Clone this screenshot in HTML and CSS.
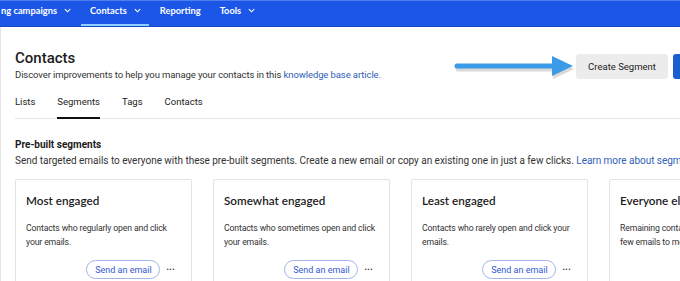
FILE: index.html
```html
<!DOCTYPE html>
<html lang="en">
<head>
    <meta charset="UTF-8">
    <meta name="viewport" content="width=device-width, initial-scale=1.0">
    <title>Contacts - Segments</title>

    <link rel="stylesheet" href="styles.css">
</head>
<body>

<nav class="topnav">
    <a class="nav-item first">ng campaigns
        <svg class="chev" viewBox="0 0 8 5"><path d="M1 1l3 3 3-3"/></svg>
    </a>
    <a class="nav-item active">Contacts
        <svg class="chev" viewBox="0 0 8 5"><path d="M1 1l3 3 3-3"/></svg>
    </a>
    <a class="nav-item">Reporting</a>
    <a class="nav-item">Tools
        <svg class="chev" viewBox="0 0 8 5"><path d="M1 1l3 3 3-3"/></svg>
    </a>
</nav>

<div class="page">

    <div class="page-head">
        <div class="page-title">
            <h1>Contacts</h1>
            <p class="lead">Discover improvements to help you manage your contacts in this <a href="#">knowledge base article.</a></p>
        </div>
        <div class="actions">
            <!-- callout arrow pointing at the button -->
            <svg class="arrow" width="122" height="26" viewBox="0 0 122 26">
                <g class="arrow-shadow" transform="translate(1 3)">
                    <line x1="4" y1="13" x2="102" y2="13"/>
                    <path d="M99 3 L120 13 L99 23 Z"/>
                </g>
                <g class="arrow-body">
                    <line x1="4" y1="13" x2="102" y2="13"/>
                    <path d="M99 3 L120 13 L99 23 Z"/>
                </g>
            </svg>
            <button class="btn btn-grey">Create Segment</button>
            <button class="btn btn-blue">Add Contacts</button>
        </div>
    </div>

    <div class="tabs">
        <a class="tab">Lists</a>
        <a class="tab active">Segments</a>
        <a class="tab">Tags</a>
        <a class="tab">Contacts</a>
    </div>

    <div class="segments">
        <h2>Pre-built segments</h2>
        <p class="lead big">Send targeted emails to everyone with these pre-built segments. Create a new email or copy an existing one in just a few clicks. <a href="#">Learn more about segments</a></p>

        <div class="cards">
            <div class="card">
                <h3>Most engaged</h3>
                <p>Contacts who regularly open and click your emails.</p>
                <div class="card-foot">
                    <button class="pill">Send an email</button>
                    <span class="dots">&bull;&bull;&bull;</span>
                </div>
            </div>
            <div class="card">
                <h3>Somewhat engaged</h3>
                <p>Contacts who sometimes open and click your emails.</p>
                <div class="card-foot">
                    <button class="pill">Send an email</button>
                    <span class="dots">&bull;&bull;&bull;</span>
                </div>
            </div>
            <div class="card">
                <h3>Least engaged</h3>
                <p>Contacts who rarely open and click your emails.</p>
                <div class="card-foot">
                    <button class="pill">Send an email</button>
                    <span class="dots">&bull;&bull;&bull;</span>
                </div>
            </div>
            <div class="card">
                <h3>Everyone else</h3>
                <p>Remaining contacts that need to get a few emails to measure engagement.</p>
                <div class="card-foot">
                    <button class="pill">Send an email</button>
                    <span class="dots">&bull;&bull;&bull;</span>
                </div>
            </div>
        </div>
    </div>

</div>

</body>
</html>
```

FILE: styles.css
```css
/* base */
body {
    margin: 0;
    width: 680px;
    height: 281px;
    overflow: hidden;
    background-color: #fff;
    color: #222;
    font-family: Roboto, "Liberation Sans", sans-serif;
}

a {
    text-decoration: none;
}

/* top navigation */
.topnav {
    display: flex;
    gap: 2px;
    height: 27px;
    box-sizing: border-box;
    background-color: #1b56e6;
    border-top: 1px solid #4f7ff0;
    border-bottom: 1px solid #1446c4;
}

.nav-item {
    display: flex;
    align-items: center;
    gap: 7px;
    padding: 0 8px 4px 9px;
    color: #fff;
    font-family: Lato, "Open Sans", sans-serif;
    font-weight: 700;
    font-size: 9.3px;
    border-bottom: 2px solid transparent;
}

.nav-item.first {
    margin-left: -8px;
}

.nav-item.active {
    border-bottom-color: #8fd0ff;
}

.chev {
    width: 7px;
    height: 5px;
    fill: none;
    stroke: #fff;
    stroke-width: 1.3;
}

/* page */
.page {
    width: 780px;
    padding-left: 14px;
    border-left: 1px solid #e6e6e6;
    box-sizing: border-box;
}

.page-head {
    display: flex;
    justify-content: space-between;
    align-items: flex-start;
    padding-top: 22px;
    padding-right: 17px;
}

h1 {
    margin: 0;
    font-size: 15px;
    font-weight: 500;
    line-height: 18px;
    color: #1c1c1c;
}

.lead {
    margin: 1px 0 0;
    font-size: 9.5px;
    line-height: 14px;
    letter-spacing: -0.1px;
    color: #333;
    white-space: nowrap;
}

.lead a {
    color: #2f5fb5;
}

.lead.big {
    margin-top: 2px;
    font-size: 10px;
    letter-spacing: -0.03px;
}

.actions {
    display: flex;
    align-items: center;
    gap: 5px;
    margin-top: 4px;
}

.arrow {
    margin-right: -4px;
    overflow: visible;
}

.arrow line {
    stroke-width: 5;
    stroke-linecap: round;
}

.arrow-body line {
    stroke: #3c9be8;
}

.arrow-body path {
    fill: #3c9be8;
}

.arrow-shadow {
    opacity: 0.22;
}

.arrow-shadow line {
    stroke: #555;
}

.arrow-shadow path {
    fill: #555;
}

.btn {
    height: 25px;
    border: none;
    border-radius: 3px;
    padding: 0;
    white-space: nowrap;
    font-family: Roboto, "Liberation Sans", sans-serif;
    font-size: 9.5px;
}

.btn-grey {
    width: 92px;
    background-color: #ececec;
    color: #222;
}

.btn-blue {
    width: 90px;
    background-color: #1a5fd0;
    color: #fff;
}

/* tabs */
.tabs {
    display: flex;
    gap: 22px;
    margin-top: 11px;
    border-bottom: 1px solid #e6e6e6;
}

.tab {
    font-size: 9.5px;
    color: #222;
    line-height: 14px;
    padding: 2px 0 8px;
    border-bottom: 2px solid transparent;
    margin-bottom: -1px;
}

.tab.active {
    border-bottom-color: #111;
}

/* segments */
.segments {
    padding-top: 19px;
}

h2 {
    margin: 0;
    font-size: 10px;
    font-weight: 700;
    line-height: 14px;
    color: #1c1c1c;
}

.cards {
    display: grid;
    grid-template-columns: repeat(4, 177px);
    gap: 21px;
    margin-top: 11px;
}

.card {
    border: 1px solid #e3e3e3;
    border-radius: 2px;
    padding: 12px 10px 10px 10px;
    height: 110px;
    box-sizing: border-box;
}

.card h3 {
    margin: 0;
    font-family: Lato, "Open Sans", sans-serif;
    font-weight: 600;
    font-size: 11.7px;
    line-height: 16px;
    color: #1c1c1c;
    white-space: nowrap;
}

.card p {
    margin: 13px 0 0;
    font-size: 8.7px;
    line-height: 14px;
    letter-spacing: -0.15px;
    color: #333;
}

.card-foot {
    display: flex;
    justify-content: flex-end;
    align-items: center;
    gap: 6px;
    margin-top: 11px;
    padding-right: 6px;
}

.pill {
    height: 19px;
    width: 74px;
    border: 1px solid #a3b6ec;
    border-radius: 10px;
    background: #fff;
    color: #3358d4;
    font-family: Roboto, "Liberation Sans", sans-serif;
    font-size: 9px;
    padding: 0;
}

.dots {
    font-size: 7px;
    letter-spacing: 0.5px;
    color: #333;
}
```
